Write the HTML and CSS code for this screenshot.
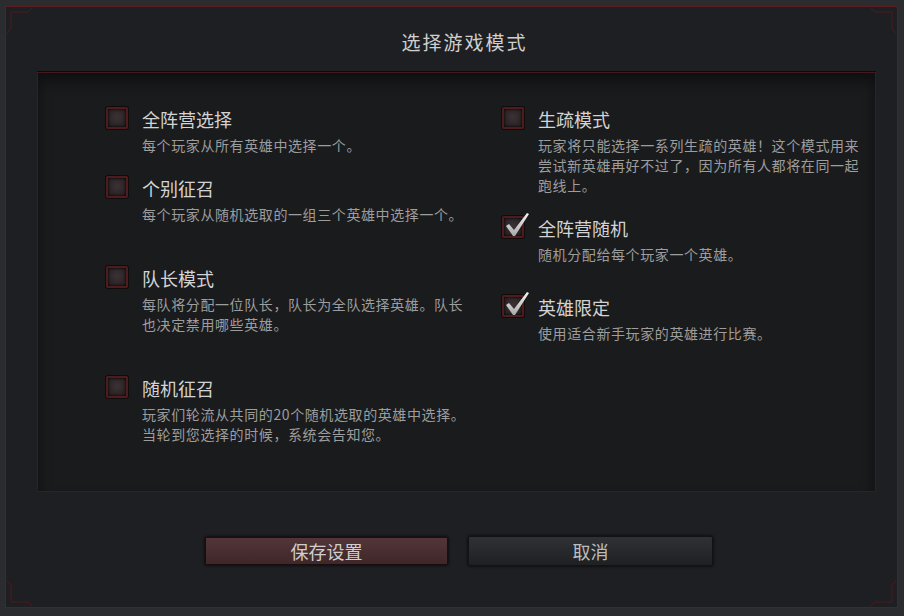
FILE: index.html
```html
<!DOCTYPE html>
<html lang="zh-CN">
<head>
    <meta charset="UTF-8">
    <meta name="viewport" content="width=device-width, initial-scale=1.0">
    <title>选择游戏模式</title>
    <link rel="stylesheet" href="styles.css">
</head>
<body>
<div class="frame">
    <svg class="corner corner-tl" width="30" height="30" viewBox="0 0 30 30"><polyline points="1,26 5,22 5,5 22,5 26,1" /></svg>
    <svg class="corner corner-tr" width="30" height="30" viewBox="0 0 30 30"><polyline points="1,26 5,22 5,5 22,5 26,1" /></svg>
    <svg class="corner corner-bl" width="30" height="30" viewBox="0 0 30 30"><polyline points="1,26 5,22 5,5 22,5 26,1" /></svg>
    <svg class="corner corner-br" width="30" height="30" viewBox="0 0 30 30"><polyline points="1,26 5,22 5,5 22,5 26,1" /></svg>

    <h1 class="title">选择游戏模式</h1>

    <div class="panel">
        <div class="column">
            <div class="mode">
                <div class="mode-head"><span class="box"></span><span class="mode-name">全阵营选择</span></div>
                <p class="mode-desc">每个玩家从所有英雄中选择一个。</p>
            </div>
            <div class="mode spaced">
                <div class="mode-head"><span class="box"></span><span class="mode-name">个别征召</span></div>
                <p class="mode-desc">每个玩家从随机选取的一组三个英雄中选择一个。</p>
            </div>
            <div class="mode spaced">
                <div class="mode-head"><span class="box"></span><span class="mode-name">队长模式</span></div>
                <p class="mode-desc">每队将分配一位队长，队长为全队选择英雄。队长也决定禁用哪些英雄。</p>
            </div>
            <div class="mode">
                <div class="mode-head"><span class="box"></span><span class="mode-name">随机征召</span></div>
                <p class="mode-desc">玩家们轮流从共同的20个随机选取的英雄中选择。当轮到您选择的时候，系统会告知您。</p>
            </div>
        </div>
        <div class="column">
            <div class="mode">
                <div class="mode-head"><span class="box"></span><span class="mode-name">生疏模式</span></div>
                <p class="mode-desc">玩家将只能选择一系列生疏的英雄！这个模式用来尝试新英雄再好不过了，因为所有人都将在同一起跑线上。</p>
            </div>
            <div class="mode half">
                <div class="mode-head">
                    <span class="box checked">
                        <svg class="tick" width="26" height="26" viewBox="0 0 26 26">
                            <defs><linearGradient id="tg1" x1="0" y1="0" x2="0" y2="1"><stop offset="0" stop-color="#f4f4f4"/><stop offset="1" stop-color="#a8a8a8"/></linearGradient></defs>
                            <polygon points="2,14 5,12 10,18 23,1 25,2 11,24 9,24" fill="url(#tg1)"/>
                        </svg>
                    </span>
                    <span class="mode-name">全阵营随机</span>
                </div>
                <p class="mode-desc">随机分配给每个玩家一个英雄。</p>
            </div>
            <div class="mode">
                <div class="mode-head">
                    <span class="box checked">
                        <svg class="tick" width="26" height="26" viewBox="0 0 26 26">
                            <defs><linearGradient id="tg2" x1="0" y1="0" x2="0" y2="1"><stop offset="0" stop-color="#f4f4f4"/><stop offset="1" stop-color="#a8a8a8"/></linearGradient></defs>
                            <polygon points="2,14 5,12 10,18 23,1 25,2 11,24 9,24" fill="url(#tg2)"/>
                        </svg>
                    </span>
                    <span class="mode-name">英雄限定</span>
                </div>
                <p class="mode-desc">使用适合新手玩家的英雄进行比赛。</p>
            </div>
        </div>
    </div>

    <div class="actions">
        <button class="btn btn-save">保存设置</button>
        <button class="btn btn-cancel">取消</button>
    </div>
</div>
</body>
</html>
```
FILE: styles.css
```css
body {
    margin: 0;
    background: #2a2c30;
    font-family: "Noto Sans CJK SC", "Liberation Sans", sans-serif;
    overflow: hidden;
}
.frame {
    position: relative;
    box-sizing: border-box;
    margin: 6px 6px 0 5px;
    height: 602px;
    border: 1px solid #5c1e21;
    background: #1e1f22;
}
.corner {
    position: absolute;
    fill: none;
    stroke: #4f1a1d;
    stroke-width: 1;
}
.corner-tl { left: 0; top: 0; }
.corner-tr { right: 0; top: 0; transform: scaleX(-1); }
.corner-bl { left: 0; bottom: 0; transform: scaleY(-1); }
.corner-br { right: 0; bottom: 0; transform: scale(-1, -1); }

.title {
    margin: 0 0 15px 0;
    padding: 20px 0 0 26px;
    height: 30px;
    line-height: 30px;
    text-align: center;
    font-size: 19px;
    font-weight: 400;
    letter-spacing: 2px;
    color: #cfcfcf;
}
.panel {
    box-sizing: border-box;
    margin-left: 31px;
    width: 839px;
    height: 420px;
    border: 1px solid #45191c;
    background: #1a1b1d;
    box-shadow: 0 -1px 0 #0b0b0c, inset 0 8px 14px rgba(0, 0, 0, 0.45);
    padding: 34px 0 0 68px;
    display: grid;
    grid-template-columns: 396px 1fr;
}
.mode {
    margin-bottom: 21px;
}
.mode.spaced {
    margin-bottom: 42px;
}
.mode.half {
    margin-bottom: 31px;
}
.mode-head {
    display: flex;
    align-items: center;
    gap: 14px;
    height: 22px;
}
.box {
    position: relative;
    box-sizing: border-box;
    width: 22px;
    height: 22px;
    flex: none;
    border: 2px solid #4e1c1f;
    border-radius: 2px;
    background: radial-gradient(circle at 50% 45%, #3b3234, #231d1f);
    box-shadow: 0 0 0 1px #110b0c, inset 0 0 3px #000;
}
.tick {
    position: absolute;
    left: 0;
    top: -6px;
}
.mode-name {
    font-size: 18px;
    color: #d3d3d3;
    line-height: 22px;
    padding-top: 2px;
}
.mode-desc {
    margin: 6px 0 0 36px;
    width: 326px;
    font-size: 14px;
    letter-spacing: 0.6px;
    line-height: 20px;
    color: #9d9d9d;
}
.actions {
    display: flex;
    align-items: center;
    gap: 20px;
    margin: 44px 0 0 199px;
}
.btn {
    box-sizing: border-box;
    font-family: "Noto Sans CJK SC", "Liberation Sans", sans-serif;
    font-size: 18px;
    color: #cfcfcf;
    padding: 0;
    cursor: pointer;
}
.btn-save {
    width: 243px;
    height: 28px;
    line-height: 26px;
    border: 1px solid #1a0e0f;
    background: linear-gradient(#533538, #3f2729);
    box-shadow: 0 0 3px #000;
}
.btn-cancel {
    width: 245px;
    height: 30px;
    line-height: 28px;
    color: #bdbdbd;
    border: 1px solid #121314;
    border-radius: 2px;
    background: linear-gradient(#303135, #1f2022);
    box-shadow: 0 0 3px #000;
}
```
